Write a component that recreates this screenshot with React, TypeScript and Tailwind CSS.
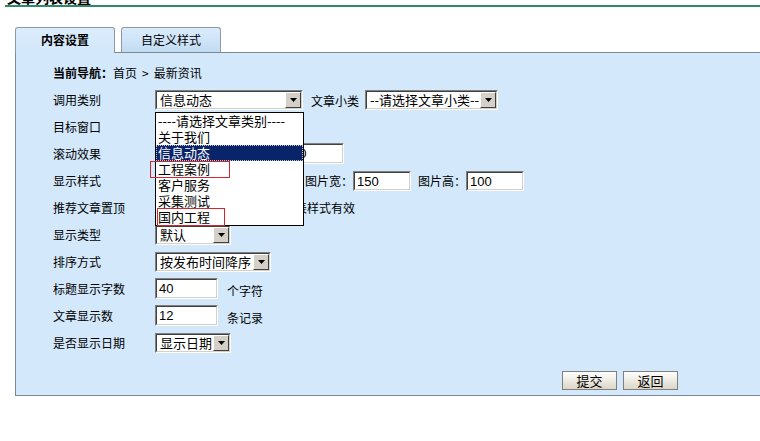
import React from "react";

const FONT = "font-['Noto_Sans_CJK_SC','Noto_Sans',sans-serif]";

function Arrow() {
  return (
    <div className="w-[16px] h-full bg-[#d4d0c8] border border-t-white border-l-white border-b-[#404040] border-r-[#404040] flex items-center justify-center">
      <svg width="7" height="4" viewBox="0 0 7 4">
        <path d="M0 0H7L3.5 4Z" fill="#000" />
      </svg>
    </div>
  );
}

function Sel({ cls, text }: { cls: string; text: string }) {
  return (
    <div className={`${cls} h-[20px] border border-t-[#808080] border-l-[#808080] border-b-white border-r-white`}>
      <div className="h-full flex border border-t-[#404040] border-l-[#404040] border-b-[#d4d0c8] border-r-[#d4d0c8] bg-white">
        <div className="flex-1 text-[13px] leading-[16px] pl-[3px] whitespace-nowrap overflow-hidden text-black">{text}</div>
        <Arrow />
      </div>
    </div>
  );
}

function Inp({ cls, value }: { cls: string; value: string }) {
  return (
    <div className={`${cls} border border-t-[#808080] border-l-[#808080] border-b-white border-r-white`}>
      <div className="h-full border border-t-[#404040] border-l-[#404040] border-b-[#d4d0c8] border-r-[#d4d0c8] bg-white text-[13px] leading-[17px] pl-[2px] font-['Liberation_Sans',sans-serif] text-black overflow-hidden whitespace-nowrap">
        {value}
      </div>
    </div>
  );
}

function Row({ label, children }: { label: string; children?: React.ReactNode }) {
  return (
    <div className="flex items-center h-[27px]">
      <div className="w-[102px] text-[12px] text-black">{label}</div>
      {children}
    </div>
  );
}

function Btn({ text }: { text: string }) {
  return (
    <div className="w-[55px] h-[19px] border border-[#7f7f7f] bg-gradient-to-b from-white to-[#dcd6c6] flex items-center justify-center text-[13px] leading-[15px] text-black">
      {text}
    </div>
  );
}

export default function App() {
  const options = ["----请选择文章类别----", "关于我们", "信息动态", "工程案例", "客户服务", "采集测试", "国内工程"];
  return (
    <div className={`w-[760px] h-[441px] bg-white relative overflow-hidden ${FONT} text-black`}>
      <div className="h-[5px] overflow-hidden pl-[7px]">
        <div className="text-[14px] font-bold leading-[14px] -mt-[10px]">文章列表设置</div>
      </div>
      <div className="h-[2px] bg-[#2e8a68] ml-[5px]" />

      <div className="ml-[15px] mt-[20px] flex items-end gap-[6px]">
        <div className="relative z-10 -mb-[1px] w-[100px] h-[26px] rounded-t-[3px] border border-b-0 border-[#8e99a3] bg-gradient-to-b from-[#dbecfc] to-[#d3e8fb] flex items-center justify-center text-[12px] font-bold pb-[1px]">
          内容设置
        </div>
        <div className="w-[100px] h-[25px] rounded-t-[3px] border border-b-0 border-[#8e99a3] bg-gradient-to-b from-[#dbecfc] to-[#c2dcf3] flex items-center justify-center text-[12px]">
          自定义样式
        </div>
      </div>

      <div className="ml-[15px] w-[760px] h-[344px] border border-[#7d8891] bg-[#d3e8fb]">
        <div className="pl-[37px] pt-[6px]">
          <div className="flex items-center h-[27px] text-[12px]">
            <span className="font-bold">当前导航：</span>
            <span>首页</span>
            <span className="mx-[5px]">&gt;</span>
            <span>最新资讯</span>
          </div>
          <Row label="调用类别">
            <Sel cls="w-[148px]" text="信息动态" />
            <span className="ml-[8px] text-[12px] mt-[3px]">文章小类</span>
            <Sel cls="w-[133px] ml-[6px]" text="--请选择文章小类--" />
          </Row>
          <Row label="目标窗口">
            <Sel cls="w-[100px]" text="原窗口" />
          </Row>
          <Row label="滚动效果">
            <Sel cls="w-[90px]" text="不滚动" />
            <span className="ml-[8px] text-[12px]">滚动速度</span>
            <Inp cls="w-[56px] h-[21px] ml-[-13px]" value="30" />
          </Row>
          <Row label="显示样式">
            <Sel cls="w-[140px]" text="标题列表" />
            <span className="ml-[10px] text-[12px] w-[48px]">图片宽：</span>
            <Inp cls="w-[58px] h-[20px]" value="150" />
            <span className="ml-[7px] text-[12px] w-[48px]">图片高：</span>
            <Inp cls="w-[58px] h-[20px]" value="100" />
          </Row>
          <Row label="推荐文章置顶">
            <Sel cls="w-[96px]" text="否" />
            <span className="ml-[8px] text-[12px]">仅对列表样式有效</span>
          </Row>
          <Row label="显示类型">
            <Sel cls="w-[76px]" text="默认" />
          </Row>
          <Row label="排序方式">
            <Sel cls="w-[116px]" text="按发布时间降序" />
          </Row>
          <Row label="标题显示字数">
            <Inp cls="w-[63px] h-[21px]" value="40" />
            <span className="ml-[9px] mt-[4px] text-[12px]">个字符</span>
          </Row>
          <Row label="文章显示数">
            <Inp cls="w-[63px] h-[21px]" value="12" />
            <span className="ml-[9px] mt-[4px] text-[12px]">条记录</span>
          </Row>
          <Row label="是否显示日期">
            <Sel cls="w-[76px]" text="显示日期" />
          </Row>
        </div>
        <div className="flex gap-[6px] pl-[546px] mt-[15px]">
          <Btn text="提交" />
          <Btn text="返回" />
        </div>
      </div>

      <div className="absolute left-[155px] top-[112px] w-[149px] border border-black bg-white z-20">
        {options.map((o, i) => (
          <div
            key={o}
            className={
              i === 2
                ? "h-[16px] leading-[16px] text-[13px] pl-[2px] bg-[#0a246a] text-white outline-1 outline-dotted outline-offset-[-1px] outline-[#c8c8c8] whitespace-nowrap"
                : "h-[16px] leading-[16px] text-[13px] pl-[2px] text-black whitespace-nowrap"
            }
          >
            {o}
          </div>
        ))}
      </div>

      <div className="absolute left-[150px] top-[161px] w-[80px] h-[17px] border border-[#d0282e] z-30" />
      <div className="absolute left-[157px] top-[208px] w-[68px] h-[18px] border border-[#d0282e] z-30" />
    </div>
  );
}
